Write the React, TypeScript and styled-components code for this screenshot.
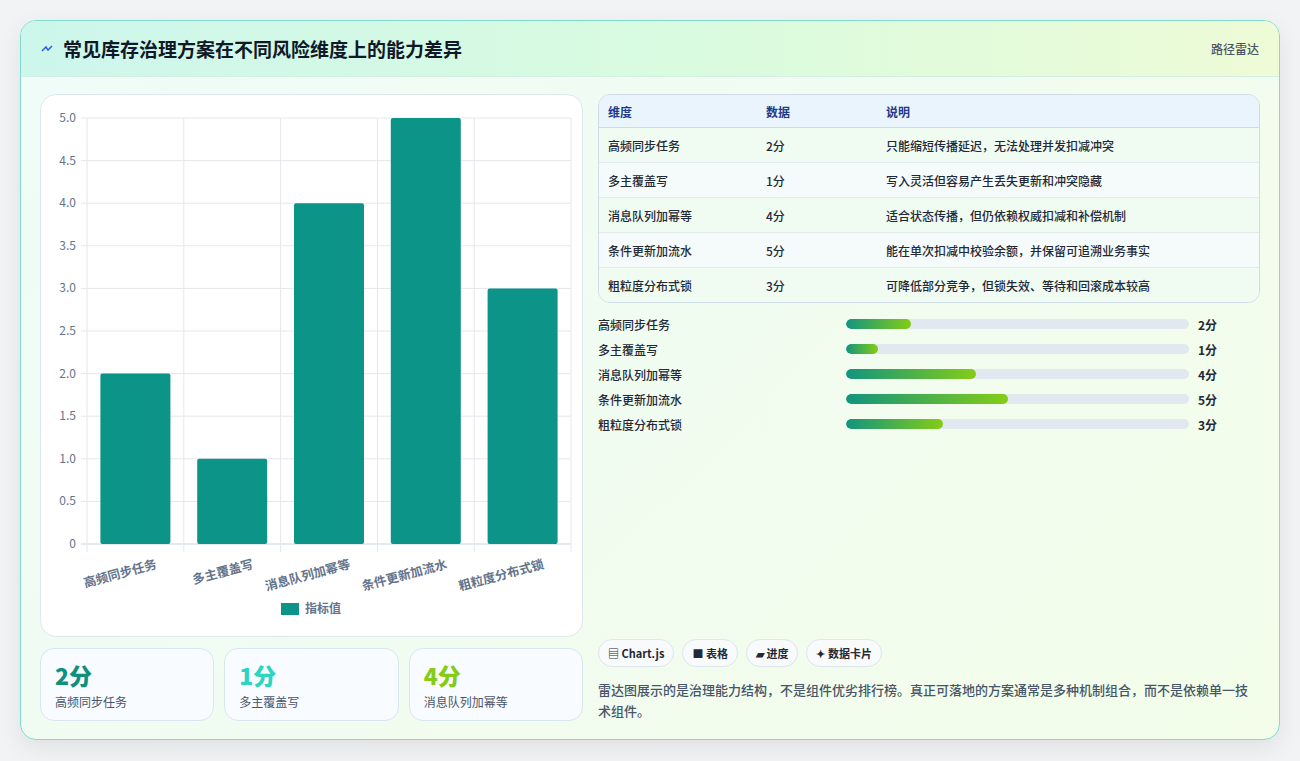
import React from "react";
import styled, { createGlobalStyle } from "styled-components";

const G = createGlobalStyle`
  body { margin:0; background:#f1f3f4; font-family: "Noto Sans CJK SC", "Noto Sans", sans-serif; }
`;
const Page = styled.div`padding:20px; height:761px; box-sizing:border-box;`;
const Card = styled.div`
  height:720px; box-sizing:border-box; border:1px solid #7fdccc; border-radius:16px; overflow:hidden;
  background:linear-gradient(135deg,#effcf8 0%,#f3fde9 100%);
  box-shadow:0 8px 24px rgba(0,0,0,0.08); display:flex; flex-direction:column;
`;
const Header = styled.div`
  height:55px; flex:none; display:flex; align-items:center; justify-content:space-between; padding:0 20px;
  background:linear-gradient(90deg,#cdf6ec 0%,#d8fbe0 50%,#eefbd6 100%); border-bottom:1px solid #d4efe4;
`;
const Title = styled.h1`margin:0; font-size:19px; font-weight:700; color:#111827; display:flex; align-items:center; gap:10px;`;
const Tag = styled.span`font-size:12px; color:#4b5563; font-weight:500;`;
const Body = styled.div`flex:1; display:grid; grid-template-columns:543px 1fr; gap:15px; padding:17px 19px 19px 19px;`;
const Left = styled.div`display:flex; flex-direction:column; gap:11px;`;
const ChartPanel = styled.div`height:543px; background:#fff; border:1px solid #dfe7ee; border-radius:16px; box-sizing:border-box; overflow:hidden;`;
const Stats = styled.div`display:grid; grid-template-columns:repeat(3,1fr); gap:10px;`;
const Stat = styled.div`height:73px; box-sizing:border-box; border:1px solid #d7e6f1; border-radius:14px; background:#f8fbff; padding:12px 14px;`;
const StatNum = styled.div<{ c: string }>`font-size:23px; font-weight:800; color:${p => p.c}; line-height:28px;`;
const StatLbl = styled.div`font-size:12px; color:#475569; margin-top:4px;`;
const Right = styled.div`display:flex; flex-direction:column;`;
const Table = styled.table`width:100%; border-collapse:separate; border-spacing:0; border:1px solid #cfdbe6; border-radius:12px; overflow:hidden; font-size:12px;`;
const Th = styled.th`text-align:left; font-weight:600; color:#1e3a8a; background:#eaf4fd; height:32px; padding:0 9px; border-bottom:1px solid #cfdbe6;`;
const Td = styled.td<{ even: boolean }>`height:34px; padding:0 9px; color:#1f2937; font-weight:500; background:${p => (p.even ? "#f5fbfa" : "#f0fbf2")}; border-bottom:1px solid #e2eaf0; tr:last-child &{border-bottom:none;}`;
const Bars = styled.div`display:flex; flex-direction:column; gap:7px; margin-top:12px;`;
const BarRow = styled.div`display:grid; grid-template-columns:248px 343px 1fr; gap:0; align-items:center; height:18px; font-size:12px; color:#1f2937; font-weight:500;`;
const Track = styled.div`height:10px; border-radius:5px; background:#e2e8f0; overflow:hidden;`;
const Fill = styled.div`height:100%; border-radius:5px; background:linear-gradient(90deg,#12957f,#84cc16);`;
const Val = styled.span`padding-left:9px; font-weight:700;`;
const Spacer = styled.div`flex:1;`;
const Chips = styled.div`display:flex; gap:8px;`;
const Chip = styled.span`height:28px; box-sizing:border-box; padding:0 9px; border:1px solid #dfe6ee; border-radius:14px; background:#f8fafc; font-size:11px; font-weight:600; color:#1f2937; display:flex; align-items:center; gap:3px;`;
const Note = styled.p`margin:12px 0 0; font-size:13px; line-height:21px; color:#475569; font-weight:500;`;

const data = [["高频同步任务",2,"只能缩短传播延迟，无法处理并发扣减冲突"],["多主覆盖写",1,"写入灵活但容易产生丢失更新和冲突隐藏"],["消息队列加幂等",4,"适合状态传播，但仍依赖权威扣减和补偿机制"],["条件更新加流水",5,"能在单次扣减中校验余额，并保留可追溯业务事实"],["粗粒度分布式锁",3,"可降低部分竞争，但锁失效、等待和回滚成本较高"]] as const;

const Chart = () => {
  const x0 = 46, x1 = 530, yb = 449, yt = 23, step = (x1 - x0) / 5, unit = (yb - yt) / 5;
  const ticks = Array.from({ length: 11 }, (_, i) => i * 0.5);
  return (
    <svg width="541" height="541" style={{ display: "block" }} fontFamily="Noto Sans CJK SC, sans-serif">
      {ticks.map(t => { const y = yb - t * unit; return <g key={t}><line x1={x0 - 6} x2={x1} y1={y} y2={y} stroke={t === 0 ? "#cbd5e1" : "#e5e7eb"} /><text x={x0 - 11} y={y + 4} fontSize="12" fill="#64748b" textAnchor="end">{t === 0 ? "0" : t.toFixed(1)}</text></g>; })}
      {Array.from({ length: 6 }, (_, i) => <line key={i} x1={x0 + i * step} x2={x0 + i * step} y1={yt} y2={yb + 8} stroke="#e5e7eb" />)}
      {data.map(([n, v], i) => {
        const cx = x0 + step * (i + 0.5);
        return <g key={n}>
          <rect x={cx - 35} y={yb - v * unit} width={70} height={v * unit} rx={2} fill="#0d9488" />
          <text transform={`translate(${cx + 22},${yb + 24}) rotate(-15)`} textAnchor="end" fontSize="12.5" fontWeight="600" fill="#64748b">{n}</text>
        </g>;
      })}
      <rect x={240} y={508} width={18} height={12} fill="#0d9488" />
      <text x={264} y={518} fontSize="12" fill="#64748b" fontWeight="600">指标值</text>
    </svg>
  );
};

export default function App() {
  return (
    <Page>
      <G />
      <Card>
        <Header>
          <Title><svg width="12" height="8" viewBox="0 0 12 8"><path d="M1 6 L5 2 L7 5 L11 1" stroke="#2563eb" strokeWidth="1.5" fill="none" /></svg>常见库存治理方案在不同风险维度上的能力差异</Title>
          <Tag>路径雷达</Tag>
        </Header>
        <Body>
          <Left>
            <ChartPanel><Chart /></ChartPanel>
            <Stats>
              <Stat><StatNum c="#0f8f7c">2分</StatNum><StatLbl>高频同步任务</StatLbl></Stat>
              <Stat><StatNum c="#2dd4bf">1分</StatNum><StatLbl>多主覆盖写</StatLbl></Stat>
              <Stat><StatNum c="#84cc16">4分</StatNum><StatLbl>消息队列加幂等</StatLbl></Stat>
            </Stats>
          </Left>
          <Right>
            <Table>
              <colgroup><col style={{ width: 158 }} /><col style={{ width: 120 }} /><col /></colgroup>
              <thead><tr><Th>维度</Th><Th>数据</Th><Th>说明</Th></tr></thead>
              <tbody>{data.map(([n, v, d], i) => <tr key={n}><Td even={i % 2 === 1}>{n}</Td><Td even={i % 2 === 1}>{v}分</Td><Td even={i % 2 === 1}>{d}</Td></tr>)}</tbody>
            </Table>
            <Bars>
              {data.map(([n, v]) => <BarRow key={n}><span>{n}</span><Track><Fill style={{ width: `${v * 9.45}%` }} /></Track><Val>{v}分</Val></BarRow>)}
            </Bars>
            <Spacer />
            <Chips><Chip>▤ Chart.js</Chip><Chip>■ 表格</Chip><Chip>▰ 进度</Chip><Chip>✦ 数据卡片</Chip></Chips>
            <Note>雷达图展示的是治理能力结构，不是组件优劣排行榜。真正可落地的方案通常是多种机制组合，而不是依赖单一技术组件。</Note>
          </Right>
        </Body>
      </Card>
    </Page>
  );
}
